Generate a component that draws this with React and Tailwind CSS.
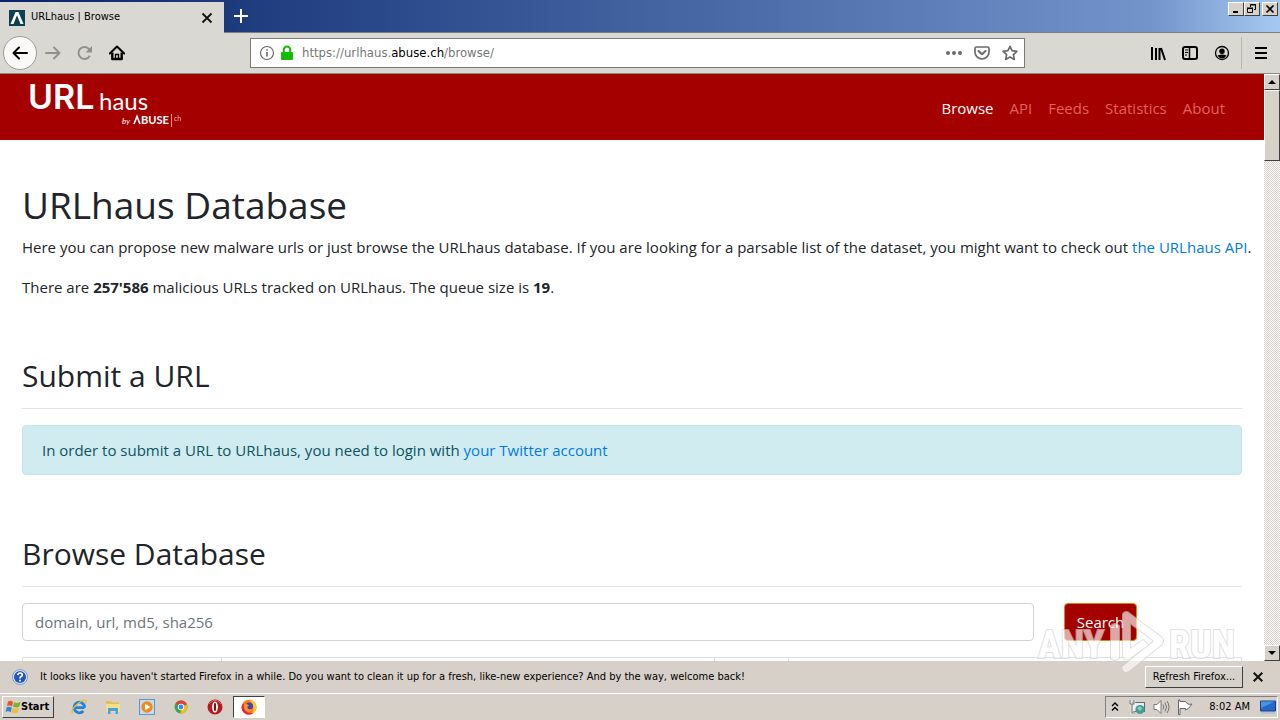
import React, { useState } from 'react';

const raised = 'border border-t-white border-l-white border-r-[#404040] border-b-[#404040] bg-[#d6d2ca]';

const navLinks = ['Browse', 'API', 'Feeds', 'Statistics', 'About'];

const WindowButton = ({ label, children }) => (
  <button aria-label={label} className={`${raised} flex h-[14px] w-4 items-center justify-center`}>
    <svg width="12" height="12" viewBox="0 0 12 12" fill="none" stroke="#000">{children}</svg>
  </button>
);

const ToolButton = ({ label, className = '', children }) => (
  <button aria-label={label} className={`flex size-8 shrink-0 items-center justify-center ${className}`}>
    <svg width="16" height="16" viewBox="0 0 16 16" fill="none" stroke="currentColor" strokeWidth="2">{children}</svg>
  </button>
);

const TitleBar = () => (
  <div className="flex h-[33px] shrink-0 border-b border-[#7b7d80] bg-linear-to-r from-[#0a246a] via-[#7394cb] via-90% to-[#a6caf0]">
    <div className="mt-[2px] -mb-px flex w-56 items-center bg-[#dad8d3] pr-[7px] pl-[9px] text-[11px] text-black">
      <svg width="16" height="16" viewBox="0 0 16 16" className="mr-[6px] shrink-0">
        <rect width="16" height="16" fill="#0d4152" />
        <path d="M1.5 14 6.6 2h2.8l5.1 12h-3L8 5.2 4.5 14z" fill="#fff" />
      </svg>
      <span className="flex-1 truncate">URLhaus | Browse</span>
      <button aria-label="Close tab" className="flex size-5 items-center justify-center">
        <svg width="12" height="12" viewBox="0 0 12 12" stroke="#111" strokeWidth="1.8"><path d="M1.500 1.500l9 9M10.500 1.500l-9 9" /></svg>
      </button>
    </div>
    <button aria-label="New tab" className="flex w-[34px] items-center justify-center">
      <svg width="14" height="14" viewBox="0 0 14 14" stroke="#fff" strokeWidth="2"><path d="M7 0v14M0 7h14" /></svg>
    </button>
    <div className="ml-auto flex pt-[2px] pr-[2px]">
      <WindowButton label="Minimize"><path d="M3 9h5" strokeWidth="2" /></WindowButton>
      <WindowButton label="Restore"><path d="M4.500 4V1.500h5v5H8M4 2h6M1.500 5.500h5v4h-5zM1 5h6" /></WindowButton>
      <span className="w-[2px]" />
      <WindowButton label="Close"><path d="M2.500 2.500l7 7M9.500 2.500l-7 7" strokeWidth="1.700" /></WindowButton>
    </div>
  </div>
);

const ToolBar = () => (
  <div className="flex h-[41px] shrink-0 items-center border-b border-[#8f8b84] bg-[#dad8d3] pl-[3px] text-black">
    <button aria-label="Back" className="flex size-[34px] shrink-0 items-center justify-center rounded-full border border-[#a09d98] bg-[#faf9f7]">
      <svg width="16" height="16" viewBox="0 0 16 16" fill="none" stroke="#000" strokeWidth="2" strokeLinecap="round" strokeLinejoin="round"><path d="M15 8H1.500M7 2.500 1.500 8 7 13.500" /></svg>
    </button>
    <ToolButton label="Forward" className="text-[#93918d]"><path d="M1 8h13.500M9 2.500 14.500 8 9 13.500" strokeLinecap="round" strokeLinejoin="round" /></ToolButton>
    <ToolButton label="Reload" className="text-[#93918d]">
      <path d="M12.800 10.800A6 6 0 1 1 12.500 4.600" /><path d="M15 1v6.500H8.500z" fill="currentColor" stroke="none" />
    </ToolButton>
    <ToolButton label="Home">
      <path d="M.8 8.500 8 1.500l7.200 7" strokeLinecap="round" strokeLinejoin="round" /><path d="M3.300 7.500V14h9.400V7.500" strokeLinejoin="round" strokeWidth="2.400" /><path d="M6.500 14V9.500h3V14" strokeWidth="1.300" />
    </ToolButton>
    <div className="mx-[117px] flex h-[30px] min-w-0 flex-1 items-center border border-[#7c7a76] bg-white px-2">
      <svg width="16" height="16" viewBox="0 0 16 16" fill="none" stroke="#6b6b6b" className="shrink-0">
        <circle cx="8" cy="8" r="6.500" strokeWidth="1.200" /><path d="M8 7v4.500M8 4.200v1.600" strokeWidth="1.600" />
      </svg>
      <svg width="16" height="16" viewBox="0 0 16 16" fill="none" className="ml-1 shrink-0">
        <path d="M4.800 8V4.800a3.200 3.200 0 0 1 6.400 0V8" stroke="#12bc00" strokeWidth="2" /><rect x="2" y="7" width="12" height="8" rx="1" fill="#12bc00" />
      </svg>
      <a href="#browse" className="ml-[7px] flex-1 truncate text-[13px] text-[#777]">
        https://urlhaus.<span className="text-black">abuse.ch</span>/browse/
      </a>
      <div className="-mr-[10px] flex text-[#6b6b6b]">
        <ToolButton label="Page actions" className="-mr-1"><g fill="currentColor" stroke="none"><circle cx="2" cy="8" r="2" /><circle cx="8" cy="8" r="2" /><circle cx="14" cy="8" r="2" /></g></ToolButton>
        <ToolButton label="Save to Pocket" className="-mr-1">
          <path d="M2.500 2h11q1.500 0 1.500 1.500V7A7 7 0 0 1 1 7V3.500Q1 2 2.500 2z" strokeWidth="1.700" /><path d="M4.500 6 8 9.300 11.500 6" strokeLinecap="round" strokeLinejoin="round" />
        </ToolButton>
        <ToolButton label="Bookmark"><path d="m8 1.300 2.100 4.300 4.800.7-3.500 3.300.9 4.800L8 12.100l-4.300 2.300.9-4.800L1.100 6.300l4.800-.7z" strokeWidth="1.700" strokeLinejoin="round" /></ToolButton>
      </div>
    </div>
    <ToolButton label="Library"><path d="M2 2v13M6 3v12M9.500 3v12M11 3l4 12" /></ToolButton>
    <ToolButton label="Sidebars"><rect x="1" y="2" width="14" height="12" rx="2" /><path d="M7.500 2v12" strokeWidth="1.500" /><path d="M3 5h3M3 7.500h3M3 10h2" strokeWidth="1" /></ToolButton>
    <ToolButton label="Account"><circle cx="8" cy="8" r="6.500" strokeWidth="1.300" /><circle cx="8" cy="6.300" r="2.700" fill="currentColor" stroke="none" /><path d="M3.500 10.500Q8 8.500 12.500 10.500 11 13.300 8 13.300T3.500 10.500z" fill="currentColor" stroke="none" /></ToolButton>
    <div className="ml-[3px] h-8 border-l border-[#b8b5b0]" />
    <ToolButton label="Menu" className="mx-[3px]"><path d="M2 3h12M2 8h12M2 13h12" /></ToolButton>
  </div>
);

const Logo = () => (
  <svg width="154" height="54" viewBox="0 0 154 54" fill="#fff" role="img" aria-label="URLhaus by abuse.ch" className="overflow-visible">
    <text x="-2" y="33" fontFamily="Inter, sans-serif" fontSize="34" fontWeight="600">URL</text>
    <g fontFamily="Lato, sans-serif" fontWeight="400">
      <text x="69" y="34" fontSize="24">haus</text>
      <text x="92" y="48" fontSize="8" fontStyle="italic">by</text>
      <text x="111" y="48" fontSize="11" fontWeight="700">BUSE</text>
      <text x="144" y="45" fontSize="7" fill="#f3b0a8">ch</text>
    </g>
    <path d="m104 48 3-7.500 3 7.500" fill="none" stroke="#fff" strokeWidth="1.600" />
    <path d="M141.500 38v13" stroke="#e79b90" />
  </svg>
);

const Page = () => {
  const [query, setQuery] = useState('');

  return (
    <div className="min-w-0 flex-1 overflow-hidden bg-white text-[15px] leading-6 text-[#212529]">
      <header className="flex h-[66px] items-center justify-between bg-[#a40000] pr-[39px] pl-[30px]">
        <a href="#home" className="pb-2"><Logo /></a>
        <nav className="flex gap-4 pt-[2px]">
          {navLinks.map((name, i) => (
            <a key={name} href={`#${name}`} className={i === 0 ? 'text-white' : 'text-[#e0625c]'}>{name}</a>
          ))}
        </nav>
      </header>

      <main className="px-[22px]">
        <h1 className="pt-[41px] text-[37px] leading-[48px] font-normal">URLhaus Database</h1>
        <p className="mt-[6px] whitespace-nowrap">
          Here you can propose new malware urls or just browse the URLhaus database. If you are looking for a parsable list of the dataset, you might want to check out <a href="#api" className="text-[#007bdf]">the URLhaus API</a>.
        </p>
        <p className="mt-4">There are <b className="font-bold">257'586</b> malicious URLs tracked on URLhaus. The queue size is <b className="font-bold">19</b>.</p>

        <h2 className="mt-[58px] border-b border-[#e3e3e3] pb-[13px] text-[30px] leading-[38px] font-normal">Submit a URL</h2>
        <div className="mt-4 rounded border border-[#bee5eb] bg-[#d1ecf1] px-[19px] py-3 text-[#0c5460]">
          In order to submit a URL to URLhaus, you need to login with <a href="#twitter" className="text-[#007bdf]">your Twitter account</a>
        </div>

        <h2 className="mt-[60px] border-b border-[#e3e3e3] pb-[13px] text-[30px] leading-[38px] font-normal">Browse Database</h2>
        <form className="mt-4 flex gap-[30px] pr-[105px]" onSubmit={e => e.preventDefault()}>
          <input
            aria-label="Search"
            value={query}
            onChange={e => setQuery(e.target.value)}
            placeholder="domain, url, md5, sha256"
            className="h-[38px] min-w-0 flex-1 rounded border border-[#ced4da] px-3 placeholder:text-[#6c757d]"
          />
          <button className="h-[38px] w-[73px] rounded border border-[#e0800c] bg-[#a40000] text-white">Search</button>
        </form>

        {/* URL table */}
        <table className="mt-4 w-full table-fixed border-collapse">
          <thead>
            <tr className="h-12 [&>th]:border [&>th]:border-[#dee2e6]">
              <th className="w-[199px]" /><th /><th className="w-[74px]" /><th className="w-[453px]" />
            </tr>
          </thead>
        </table>
      </main>
    </div>
  );
};

const ScrollBar = () => (
  <div className="flex w-4 shrink-0 flex-col bg-[repeating-conic-gradient(#ffffff_0_25%,#d4d0c8_0_50%)] bg-[length:2px_2px]">
    <button aria-label="Scroll up" className={`${raised} flex h-4 items-center justify-center`}>
      <svg width="8" height="4" viewBox="0 0 8 4"><path d="M4 0l4 4H0z" /></svg>
    </button>
    <div className={`${raised} h-[71px]`} />
    <button aria-label="Scroll down" className={`${raised} mt-auto flex h-4 items-center justify-center`}>
      <svg width="8" height="4" viewBox="0 0 8 4"><path d="M4 4l4-4H0z" /></svg>
    </button>
  </div>
);

const Notification = () => (
  <div className="flex h-8 shrink-0 items-center bg-[#d6d0c8] pr-[17px] pl-3 text-[11px] text-black">
    <svg width="16" height="16" viewBox="0 0 16 16" className="mr-3 shrink-0">
      <circle cx="8" cy="8" r="7.500" fill="#dce8fa" stroke="#7d9bd0" /><circle cx="8" cy="8" r="6" fill="#2455bd" />
      <path d="M5.800 6.200q.2-2.200 2.300-2.200 2.200 0 2.200 1.900 0 1-1.200 1.700Q8 8.200 8 9.500M8 10.800v1.700" fill="none" stroke="#fff" strokeWidth="1.700" />
    </svg>
    <span className="flex-1 truncate">It looks like you haven't started Firefox in a while. Do you want to clean it up for a fresh, like-new experience? And by the way, welcome back!</span>
    <button className={`${raised} h-[22px] w-[98px]`}>R<u>e</u>fresh Firefox...</button>
    <button aria-label="Dismiss" className="ml-[10px]">
      <svg width="10" height="10" viewBox="0 0 10 10" stroke="#111" strokeWidth="2"><path d="M.7.7l8.600 8.600M9.300.7.7 9.300" /></svg>
    </button>
  </div>
);

const apps = [
  ['Internet Explorer', <>
    <path d="M13.500 8.700H4.500M13.600 8.700A5.300 5.300 0 1 0 12.300 12" fill="none" stroke="#2385d8" strokeWidth="2.800" />
    <path d="M1.500 14.500Q-.5 11 6 5.500 13-.5 15 1.500q.8 1-.7 3.500" fill="none" stroke="#e7b93c" strokeWidth="1.200" />
  </>],
  ['Explorer', <>
    <path d="M1 2h5l1 1.500h7V8H1z" fill="#e3be55" /><path d="M1 5h14v8H1z" fill="#f6df8a" />
    <path d="M3 15V9h10v6h-2.500v-3h-5v3z" fill="#48a3dc" />
  </>],
  ['Media Player', <>
    <rect x=".5" y=".5" width="15" height="15" fill="#c3dcf4" stroke="#5b97d1" />
    <circle cx="8" cy="8" r="5.700" fill="#f18a17" /><path d="M6 4.700 11.500 8 6 11.300z" fill="#fff" />
  </>],
  ['Chrome', <>
    <circle cx="8" cy="8" r="6.500" fill="#35a853" /><path d="M8 8 2.400 4.700A6.500 6.500 0 0 1 14 5.500H8z" fill="#e34133" />
    <path d="M8 8l6-2.500A6.500 6.500 0 0 1 7.500 14.500z" fill="#fbbc05" /><circle cx="8" cy="8" r="3.200" fill="#fff" /><circle cx="8" cy="8" r="2.400" fill="#4285f4" />
  </>],
  ['Opera', <>
    <circle cx="8" cy="8" r="7.500" fill="#b51c1c" /><path d="M2 5a7 7 0 0 1 12 0" stroke="#dc6560" fill="none" />
    <ellipse cx="8" cy="8" rx="2.900" ry="5.500" fill="#fff" /><ellipse cx="8" cy="8" rx="1.100" ry="4.300" fill="#741010" />
  </>],
];

const TaskBar = () => (
  <div className="flex h-[27px] shrink-0 items-center border-t border-white bg-[#d6d0c8] pl-[2px] text-black">
    <button className={`${raised} flex h-[22px] w-[52px] items-center pl-[2px] text-[11px] font-bold`}>
      <svg width="16" height="16" viewBox="0 0 16 16" className="shrink-0">
        <path d="M3 2.500Q6 .8 8 3L7 7.500Q4.500 5.800 2 7z" fill="#e8552b" /><path d="M9 3.300q3 1.500 6.500-.3l-1.300 4.700Q11 9 8 7.700z" fill="#74b62c" />
        <path d="M1.700 8.200Q4.500 7 6.800 8.700l-1 4.500Q3.500 11.500.5 12.800z" fill="#3683d8" /><path d="M7.700 9q3 1.500 6.200 0l-1.300 4.500q-3 1.500-6 0z" fill="#f5bd29" />
      </svg>
      Start
    </button>
    <div className="ml-[17px] flex gap-[18px]">
      {apps.map(([name, art]) => (
        <button key={name} aria-label={name}><svg width="16" height="16" viewBox="0 0 16 16">{art}</svg></button>
      ))}
    </div>
    <button aria-label="Firefox" className="ml-[10px] flex h-[22px] w-8 items-center justify-center border border-t-[#404040] border-r-white border-b-white border-l-[#404040] bg-white">
      <svg width="16" height="16" viewBox="0 0 16 16">
        <circle cx="8" cy="8.200" r="7.500" fill="#ff7a16" /><path d="M8 .5q7 1.500 7.500 7.500-.3 5-4.500 7Q15 7 8 .5z" fill="#ffca28" />
        <path d="M1 6Q-.5 12 5 15q4 1.500 7-1-6 .5-8-3.500Q2.500 8 3 4z" fill="#e8243c" /><circle cx="8.300" cy="7.300" r="3.700" fill="#3c46b8" />
        <path d="M3 5.500q3-1.500 5 1Q6 7 6.300 9q1.700 2.500 5 .5-1.500 4-5 3Q2 11 3 5.500z" fill="#ff9425" />
      </svg>
    </button>
    <div className="mr-[2px] ml-auto flex h-[22px] items-center border border-t-[#808080] border-r-white border-b-white border-l-[#808080] pr-px pl-[5px] text-[11px]">
      <svg width="8" height="10" viewBox="0 0 8 10" fill="none" stroke="#000" strokeWidth="1.400"><path d="M1 4l3-3 3 3M1 8.500l3-3 3 3" /></svg>
      <svg width="16" height="16" viewBox="0 0 16 16" className="ml-[10px]">
        <rect x="3.500" y="3.500" width="12" height="9" fill="#e8eef0" stroke="#5d6b70" /><circle cx="11" cy="10.500" r="4.500" fill="#3f9c9c" /><path d="M8 9q3-3 5 0-1 4-3 2z" fill="#8fd0ae" />
        <path d="M1 1v4h4V1M3 5v9h3" fill="none" stroke="#fff" strokeWidth="2.500" /><path d="M1 1v4h4V1M3 5v9h3" fill="none" stroke="#666" strokeWidth="1.100" />
      </svg>
      <svg width="17" height="16" viewBox="0 0 17 16" className="ml-2" fill="none" stroke="#777">
        <path d="M1 5.500h3l4-4v13l-4-4H1z" fill="#fff" /><path d="M10 5.500q1.500 2.500 0 5M12 3.500q3 4.500 0 9M14 2q4 6 0 12" />
      </svg>
      <svg width="16" height="16" viewBox="0 0 16 16" className="ml-[7px]" fill="#fff" stroke="#666">
        <path d="M1.500 1v14.500h1.500V9.500h5.500V11q3-.5 6.500-6-3 1-5-.5L8.500 2.500H3V1z" />
      </svg>
      <span className="ml-4">8:02 AM</span>
      <svg width="16" height="14" viewBox="0 0 16 14" className="ml-[10px]">
        <path d="M.5 1h15v10H.5z" fill="#2268c8" stroke="#1d3f86" /><path d="M1 1.500h14L1 8z" fill="#4b91e4" /><path d="M1 13h14" stroke="#9bb2cd" />
      </svg>
    </div>
  </div>
);

/* translucent mark over the lower right corner */
const Watermark = () => (
  <svg width="200" height="66" viewBox="0 0 200 66" className="pointer-events-none absolute right-[45px] bottom-[46px] overflow-visible opacity-65" fill="#fff" stroke="#cfcfcf" strokeWidth="2" paintOrder="stroke">
    <g fontFamily="'Liberation Sans Narrow', 'Roboto Condensed', sans-serif" fontSize="38" fontWeight="700">
      <text x="3" y="50">ANY</text>
      <text x="134" y="50">RUN</text>
    </g>
    <path d="M76 18q4-4 8 0v32q-4 4-8 0zM88 6q3-4 7 0l31 23q4 4 0 8L94 63q-6 3-7-4l32-26L95 15v26l13-9 5 5-19 14q-6 2-6-4z" />
  </svg>
);

const App = () => (
  <div className="relative flex h-screen flex-col overflow-hidden font-['DejaVu_Sans_Condensed','DejaVu_Sans',sans-serif]">
    <TitleBar />
    <ToolBar />
    <div className="flex min-h-0 flex-1 font-['Open_Sans','Noto_Sans',sans-serif]">
      <Page />
      <ScrollBar />
    </div>
    <Notification />
    <TaskBar />
    <Watermark />
  </div>
);

export default App;
